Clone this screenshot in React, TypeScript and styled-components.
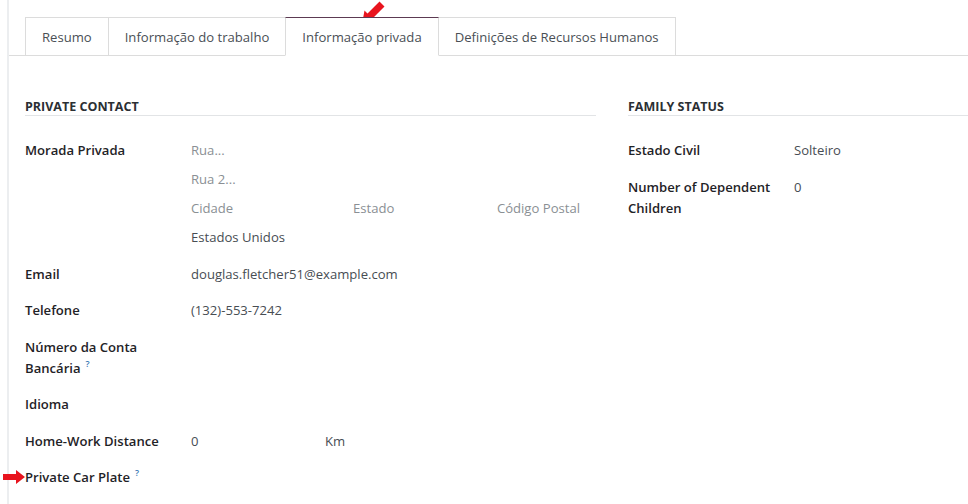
import styled, { createGlobalStyle } from 'styled-components'

const GlobalStyle = createGlobalStyle`
    html, body {
        margin: 0;
        padding: 0;
        background: #fff;
    }
    body {
        font-family: 'Open Sans', 'Noto Sans', sans-serif;
        color: #212529;
        -webkit-font-smoothing: antialiased;
    }
`

interface IRow {
    label: string,
    help?: boolean,
    value?: string,
}

const tabs = ['Resumo', 'Informação do trabalho', 'Informação privada', 'Definições de Recursos Humanos']
const activeTab = 2

const App = () => {
    return (
        <>
            <GlobalStyle />
            <Page>
                <Sheet>
                    <TabBar>
                        {tabs.map((t, i) => (
                            <Tab key={t} $active={i === activeTab}>{t}</Tab>
                        ))}
                    </TabBar>
                    <Columns>
                        <Group>
                            <GroupTitle>Private Contact</GroupTitle>
                            <Row>
                                <Label>Morada Privada</Label>
                                <Address>
                                    <Placeholder>Rua...</Placeholder>
                                    <Placeholder>Rua 2...</Placeholder>
                                    <CityLine>
                                        <Placeholder>Cidade</Placeholder>
                                        <Placeholder>Estado</Placeholder>
                                        <Placeholder>Código Postal</Placeholder>
                                    </CityLine>
                                    <Value>Estados Unidos</Value>
                                </Address>
                            </Row>
                            <Row>
                                <Label>Email</Label>
                                <Value>douglas.fletcher51@example.com</Value>
                            </Row>
                            <Row>
                                <Label>Telefone</Label>
                                <Value>(132)-553-7242</Value>
                            </Row>
                            <Row>
                                <Label>Número da Conta Bancária<Help>?</Help></Label>
                                <Value />
                            </Row>
                            <Row>
                                <Label>Idioma</Label>
                                <Value />
                            </Row>
                            <Row>
                                <Label>Home-Work Distance</Label>
                                <DistanceLine>
                                    <Value>0</Value>
                                    <Value>Km</Value>
                                </DistanceLine>
                            </Row>
                            <Row>
                                <Label>
                                    <PointerRight width="22" height="14" viewBox="0 0 22 14">
                                        <path d="M0 4 H13 V0 L22 7 L13 14 V10 H0 Z" fill="#e8141e" />
                                    </PointerRight>
                                    Private Car Plate<Help>?</Help>
                                </Label>
                                <Value />
                            </Row>
                        </Group>
                        <Group>
                            <GroupTitle>Family Status</GroupTitle>
                            {familyRows.map((r) => (
                                <Row key={r.label}>
                                    <Label>{r.label}{r.help && <Help>?</Help>}</Label>
                                    <Value>{r.value}</Value>
                                </Row>
                            ))}
                        </Group>
                    </Columns>
                </Sheet>
                <PointerDown width="25" height="24" viewBox="0 0 25 24">
                    <path d="M1 23 L3.5 9.5 L6.5 12.5 L18.5 0.5 L23.5 5.5 L11.5 17.5 L14.5 20.5 Z" fill="#e8141e" />
                </PointerDown>
            </Page>
        </>
    )
}

const familyRows: IRow[] = [
    { label: 'Estado Civil', value: 'Solteiro' },
    { label: 'Number of Dependent Children', value: '0' },
]

export default App

const Page = styled.div`
    position: relative;
    width: 968px;
    height: 504px;
    overflow: hidden;
    background: #fff;
`

const Sheet = styled.div`
    margin-left: 7px;
    height: 100%;
    border-left: 2px solid #eceef0;
    padding-top: 17px;
    box-sizing: border-box;
`

const TabBar = styled.div`
    display: flex;
    padding-left: 16px;
    border-bottom: 1px solid #dcdcdc;
    height: 38px;
`

const Tab = styled.div<{ $active: boolean }>`
    display: flex;
    align-items: center;
    padding: 0 16px;
    box-sizing: border-box;
    margin-right: -1px;
    font-size: 13.1px;
    color: #4a4f55;
    background: #fff;
    border: 1px solid #dcdcdc;
    border-top-color: ${(p) => (p.$active ? '#5c3a52' : '#dcdcdc')};
    border-bottom: ${(p) => (p.$active ? '1px solid #fff' : 'none')};
    position: relative;
    z-index: ${(p) => (p.$active ? 1 : 0)};
    height: ${(p) => (p.$active ? '39px' : '38px')};
`

const Columns = styled.div`
    display: grid;
    grid-template-columns: 571px 1fr;
    column-gap: 32px;
    padding: 43px 0 0 16px;
`

const Group = styled.div`
    display: flex;
    flex-direction: column;
`

const GroupTitle = styled.h3`
    margin: 0 0 24px 0;
    padding: 0;
    border-bottom: 1px solid #e2e4e6;
    font-size: 12.5px;
    font-weight: 700;
    line-height: 16px;
    text-transform: uppercase;
    color: #2b2f33;
`

const Row = styled.div`
    display: grid;
    grid-template-columns: 166px 1fr;
    margin-bottom: 15.5px;
    font-size: 13.1px;
    line-height: 21px;
`

const Label = styled.div`
    position: relative;
    font-weight: 600;
    color: #1f2327;
    padding-right: 12px;
`

const Help = styled.span`
    display: inline-block;
    margin-left: 5px;
    padding-top: 1px;
    font-size: 9px;
    font-weight: 600;
    line-height: 9px;
    color: #3a79b5;
    vertical-align: top;
`

const Value = styled.div`
    color: #474d53;
    min-height: 21px;
`

const Placeholder = styled.div`
    color: #8a8f94;
`

const Address = styled.div`
    display: flex;
    flex-direction: column;
    gap: 8px;
`

const CityLine = styled.div`
    display: grid;
    grid-template-columns: 162px 1fr auto;
    padding-right: 16px;
`

const DistanceLine = styled.div`
    display: grid;
    grid-template-columns: 134px auto;
`

const PointerRight = styled.svg`
    position: absolute;
    left: -22px;
    top: 3px;
`

const PointerDown = styled.svg`
    position: absolute;
    left: 361px;
    top: 1px;
`
